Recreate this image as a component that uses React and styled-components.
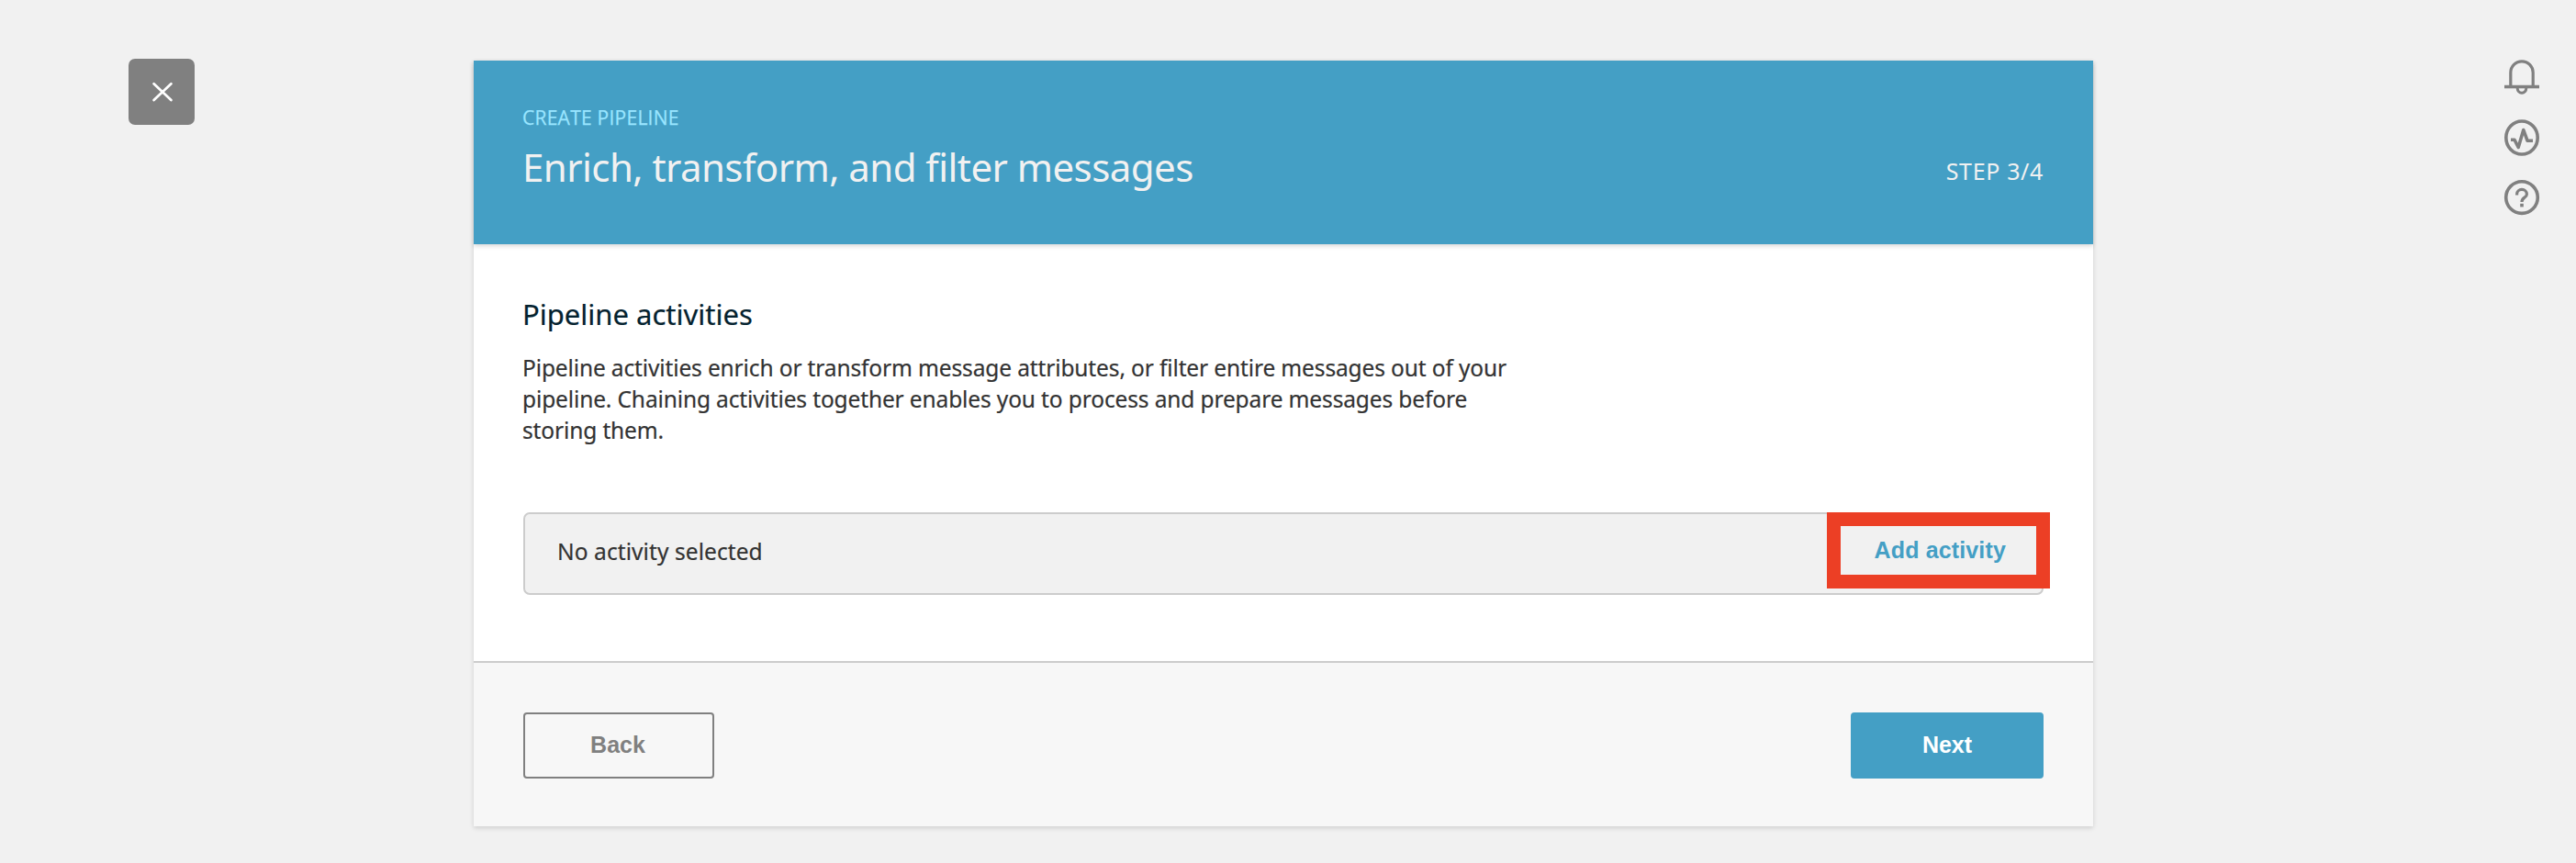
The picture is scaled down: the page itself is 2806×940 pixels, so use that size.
import React from "react";
import styled, { createGlobalStyle } from "styled-components";

const GlobalStyle = createGlobalStyle`
  * { box-sizing: border-box; }
  body { margin: 0; background: #f1f1f1; }
`;

const Page = styled.div`
  display: flex;
  align-items: flex-start;
  width: 2806px;
  height: 940px;
  overflow: hidden;
  background: #f1f1f1;
  font-family: "Noto Sans", "Open Sans", sans-serif;
  color: #333;
`;

const LeftGutter = styled.div`
  width: 516px;
  padding: 64px 0 0 140px;
`;

const CloseButton = styled.button`
  display: flex;
  align-items: center;
  justify-content: center;
  width: 72px;
  height: 72px;
  padding: 0;
  border: 0;
  border-radius: 7px;
  background: #808080;
`;

const Card = styled.main`
  width: 1764px;
  margin-top: 66px;
  background: #fff;
  box-shadow: 0 2px 5px rgba(0, 0, 0, 0.14);
`;

const CardHeader = styled.header`
  display: flex;
  justify-content: space-between;
  height: 200px;
  padding: 48px 54px 0 53px;
  background: #449fc5;
  box-shadow: 0 2px 5px rgba(0, 0, 0, 0.16);
`;

const Titles = styled.div`
  display: flex;
  flex-direction: column;
  gap: 11px;
`;

const Eyebrow = styled.div`
  font-family: "Open Sans", "Noto Sans", sans-serif;
  font-size: 21px;
  line-height: 28px;
  letter-spacing: 0.25px;
  color: #99e5ff;
  -webkit-text-stroke: 0.25px currentColor;
`;

const Title = styled.h1`
  margin: 0;
  font-size: 42px;
  font-weight: 400;
  line-height: 58px;
  letter-spacing: -0.55px;
  color: #f1f1f1;
`;

const Step = styled.div`
  margin-top: 55px;
  font-size: 25px;
  line-height: 34px;
  letter-spacing: 0.65px;
  color: #f1f1f1;
`;

const CardBody = styled.section`
  height: 454px;
  padding: 55px 54px 0;
`;

const Heading = styled.h2`
  margin: 0 0 21px -1px;
  font-size: 31px;
  font-weight: 400;
  line-height: 42px;
  color: #04222f;
  -webkit-text-stroke: 0.2px currentColor;
`;

const Description = styled.p`
  max-width: 1090px;
  margin: 0 0 72px -1px;
  font-size: 24.5px;
  line-height: 34px;
  letter-spacing: -0.13px;
  -webkit-text-stroke: 0.2px currentColor;
`;

const ActivityBar = styled.div`
  position: relative;
  display: flex;
  align-items: center;
  justify-content: space-between;
  height: 90px;
  padding: 0 39px 5px 35px;
  border: 2px solid #ccc;
  border-radius: 7px;
  background: #f1f1f1;
`;

const ActivityLabel = styled.span`
  font-size: 24.5px;
  line-height: 34px;
  letter-spacing: 0.08px;
  -webkit-text-stroke: 0.2px currentColor;
`;

const LinkButton = styled.button`
  margin: -3px 0 0;
  padding: 0;
  border: 0;
  background: none;
  font: bold 25px/34px "Liberation Sans", Arial, sans-serif;
  letter-spacing: 0.15px;
  color: #449fc5;
`;

const Highlight = styled.div`
  position: absolute;
  top: -2px;
  right: -9px;
  width: 243px;
  height: 83px;
  border: 15px solid #ec3f25;
  pointer-events: none;
`;

const CardFooter = styled.footer`
  display: flex;
  justify-content: space-between;
  align-items: flex-start;
  height: 180px;
  padding: 54px 54px 0;
  border-top: 2px solid #ccc;
  background: #f7f7f7;
`;

const Button = styled.button`
  width: ${(p) => (p.$primary ? 210 : 208)}px;
  height: 72px;
  padding: 0 ${(p) => (p.$primary ? 0 : 2)}px 2px 0;
  border: 2px solid ${(p) => (p.$primary ? "#449fc5" : "#808080")};
  border-radius: 4px;
  background: ${(p) => (p.$primary ? "#449fc5" : "transparent")};
  color: ${(p) => (p.$primary ? "#fff" : "#808080")};
  font: bold 25px/34px "Liberation Sans", Arial, sans-serif;
`;

const IconRail = styled.nav`
  display: flex;
  flex: 1;
  flex-direction: column;
  align-items: flex-end;
  gap: 26px;
  padding: 64px 39px 0 0;
`;

const RailIcon = styled.svg`
  display: block;
  width: 40px;
  height: 40px;
  fill: none;
  stroke: #808080;
  stroke-width: 3.6;
`;

export default function App() {
  return (
    <>
      <GlobalStyle />
      <Page>
        <LeftGutter>
          <CloseButton aria-label="Close">
            <svg width="24" height="24" viewBox="0 0 24 24" fill="none" stroke="#fff" strokeWidth="2.7" strokeLinecap="round">
              <path d="M3.6 3.2L22.4 21M22.4 3.2L3.6 21" />
            </svg>
          </CloseButton>
        </LeftGutter>
        <Card>
          <CardHeader>
            <Titles>
              <Eyebrow>CREATE PIPELINE</Eyebrow>
              <Title>Enrich, transform, and filter messages</Title>
            </Titles>
            <Step>STEP 3/4</Step>
          </CardHeader>
          <CardBody>
            <Heading>Pipeline activities</Heading>
            <Description>
              Pipeline activities enrich or transform message attributes, or filter entire messages out of your
              pipeline. Chaining activities together enables you to process and prepare messages before storing them.
            </Description>
            <ActivityBar>
              <ActivityLabel>No activity selected</ActivityLabel>
              <LinkButton>Add activity</LinkButton>
              <Highlight />
            </ActivityBar>
          </CardBody>
          <CardFooter>
            <Button>Back</Button>
            <Button $primary>Next</Button>
          </CardFooter>
        </Card>
        <IconRail>
          <RailIcon viewBox="0 0 40 40">
            <path d="M7.8 30V15a12.2 12.2 0 0 1 24.4 0V30" strokeWidth="3.2" />
            <path d="M1 30.5H39" />
            <path d="M15.2 32a4.8 5.2 0 0 0 9.6 0" strokeWidth="3" />
          </RailIcon>
          <RailIcon viewBox="0 0 40 40">
            <ellipse cx="20" cy="20" rx="17.2" ry="18" />
            <path d="M8 22.2H12L16.2 30.5L21.8 11.5L26 23.2H32" strokeLinejoin="round" />
          </RailIcon>
          <RailIcon viewBox="0 0 40 40">
            <circle cx="20" cy="19.1" r="17.3" />
            <path d="M14.6 16.4v-1a5.4 5 0 0 1 10.8 0c0 4.4-5.4 3.2-5.4 8.6" strokeWidth="3.2" />
            <path d="M20 25.8v3.6" strokeWidth="3.6" />
          </RailIcon>
        </IconRail>
      </Page>
    </>
  );
}
